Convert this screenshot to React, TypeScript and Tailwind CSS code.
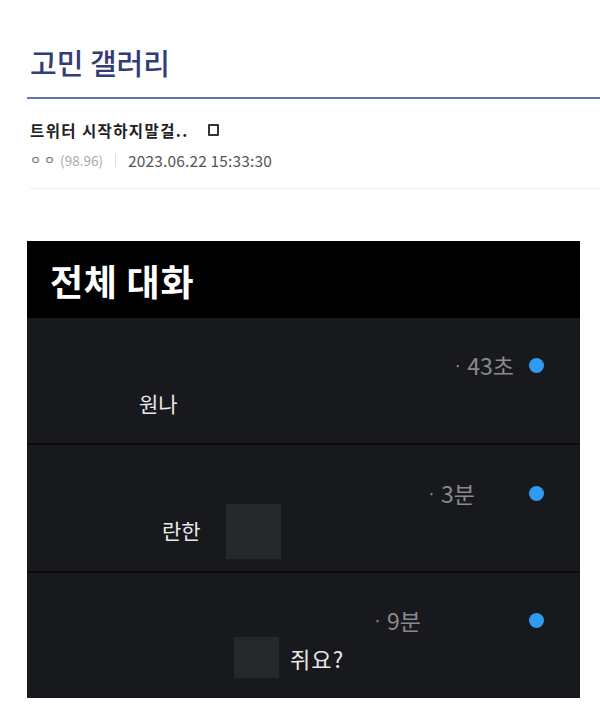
import React from "react";

const font = { fontFamily: '"Noto Sans CJK KR", "Noto Sans", sans-serif' };

function Dot() {
  return <div className="w-[15px] h-[15px] rounded-full bg-[#2f9bf0]" />;
}

function Time({ t, mr }: { t: string; mr: string }) {
  return (
    <span className={`flex items-center text-[23px] leading-[20px] text-[#8a8a8e] ${mr}`}>
      <span className="text-[16px]">·</span>
      <span className="ml-[5px]">{t}</span>
    </span>
  );
}

export default function App() {
  return (
    <div className="w-[600px] h-[718px] bg-white overflow-hidden" style={font}>
      <div className="pl-[27px]">
        <div className="pt-[40px] pl-[3px] h-[97px]">
          <div className="text-[29px] leading-[44px] font-medium text-[#323c76]">고민 갤러리</div>
        </div>
        <div className="h-[2px] bg-[#6b72a6]" />
        <div className="pl-[3px] pt-[21px]">
          <div className="flex items-center text-[15.5px] leading-[20px] font-bold text-[#222] tracking-[0.09em]">
            <span>트위터 시작하지말걸..</span>
            <span className="ml-[19px] w-[11px] h-[12px] border-[2px] border-[#333] rounded-[1px]" />
          </div>
          <div className="flex items-center mt-[10px] text-[15.5px] leading-[20px] text-[#555]">
            <span className="text-[#666] text-[12px] tracking-[0.25em]">ㅇㅇ</span>
            <span className="ml-[2px] text-[13.5px] text-[#aaa]">(98.96)</span>
            <span className="mx-[12px] w-px h-[13px] bg-[#ddd]" />
            <span className="tracking-[0.01em]">2023.06.22 15:33:30</span>
          </div>
        </div>
        <div className="mt-[18px] ml-[3px] h-px bg-[#eeeeee]" />
        <div className="mt-[52px] w-[553px] bg-[#18191d]">
          <div className="h-[77px] bg-black flex items-center pl-[23px]">
            <span className="text-[36px] font-bold text-white leading-none tracking-[0.02em]">전체 대화</span>
          </div>
          <div className="h-[127px] pt-[37px] border-b-[2px] border-[#0c0c0e]">
            <div className="flex items-center justify-end h-[20px] pr-[36px]">
              <Time t="43초" mr="mr-[15px]" />
              <Dot />
            </div>
            <div className="pl-[112px] mt-[13px] text-[21px] leading-[30px] text-[#e8e8e8]">원나</div>
          </div>
          <div className="h-[128px] pt-[38px] border-b-[2px] border-[#0c0c0e]">
            <div className="flex items-center justify-end h-[20px] pr-[36px]">
              <Time t="3분" mr="mr-[54px]" />
              <Dot />
            </div>
            <div className="flex items-center pl-[135px] mt-[1px]">
              <span className="w-[64px] text-[21px] leading-[30px] text-[#e8e8e8] mt-[-4px]">란한</span>
              <span className="w-[55px] h-[55px] bg-[#26272b]" />
            </div>
          </div>
          <div className="h-[125px] pt-[37px]">
            <div className="flex items-center justify-end h-[20px] pr-[36px]">
              <Time t="9분" mr="mr-[108px]" />
              <Dot />
            </div>
            <div className="flex items-end pl-[207px] mt-[7px]">
              <span className="w-[45px] h-[41px] bg-[#26272b]" />
              <span className="ml-[11px] text-[22px] leading-[30px] text-[#e8e8e8] mb-[5px] tracking-[0.05em]">쥐요?</span>
            </div>
          </div>
        </div>
      </div>
    </div>
  );
}
